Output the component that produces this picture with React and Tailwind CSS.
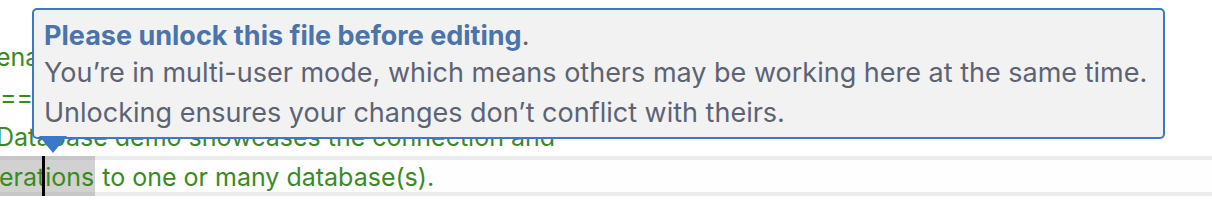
import React from 'react';

const FONT = { fontFamily: 'Inter, "Noto Sans", sans-serif' };

const Line = ({ children, className = '' }) => (
  <div className={`h-[40px] flex items-center pt-[4px] whitespace-nowrap text-[25px] text-[#3a8a23] ${className}`}>
    {children}
  </div>
);

export default function App() {
  return (
    <div className="relative w-[1212px] h-[200px] overflow-hidden bg-white" style={FONT}>
      {/* editor */}
      <div className="flex flex-col">
        <div className="h-[36px]" />
        <Line className="-ml-[4px]">enable</Line>
        <Line>=====================</Line>
        <Line className="-ml-[4px]">Database demo showcases the connection and</Line>
        <div className="relative h-[40px] flex items-stretch whitespace-nowrap text-[25px] text-[#3a8a23] bg-[#fefefe] shadow-[inset_0_4px_0_#ececec,inset_0_-4px_0_#ececec]">
          <span className="flex items-center pt-[4px] bg-[#d1d1d1] -ml-[1px] pr-[1px] shadow-[inset_0_4px_0_#c6c6c6,inset_0_-4px_0_#c6c6c6]">erations</span>
          <span className="flex items-center pt-[4px]">&nbsp;to one or many database(s).</span>
          <div className="absolute left-[42px] top-0 w-[3px] h-full bg-black" />
        </div>
      </div>

      {/* tooltip */}
      <div className="absolute left-[32px] top-[8px] w-[1133px] h-[131px] rounded-[5px] border-2 border-[#3b78c8] bg-[#f2f2f3] pl-[10px] pt-[4px] text-[27px] leading-[39px] text-[#5d6372]">
        <div className="relative top-[2px]">
          <span className="font-bold text-[#4a74aa]">Please unlock this file before editing</span>.
        </div>
        <div>You’re in multi-user mode, which means others may be working here at the same time.</div>
        <div className="relative top-[1px]">Unlocking ensures your changes don’t conflict with theirs.</div>
        <svg className="absolute left-[5px] top-full -mt-[1px]" width="28" height="18" viewBox="0 0 28 18">
          <path d="M0 0 L28 0 L14 17 Z" fill="#3b78c8" />
        </svg>
      </div>
    </div>
  );
}
